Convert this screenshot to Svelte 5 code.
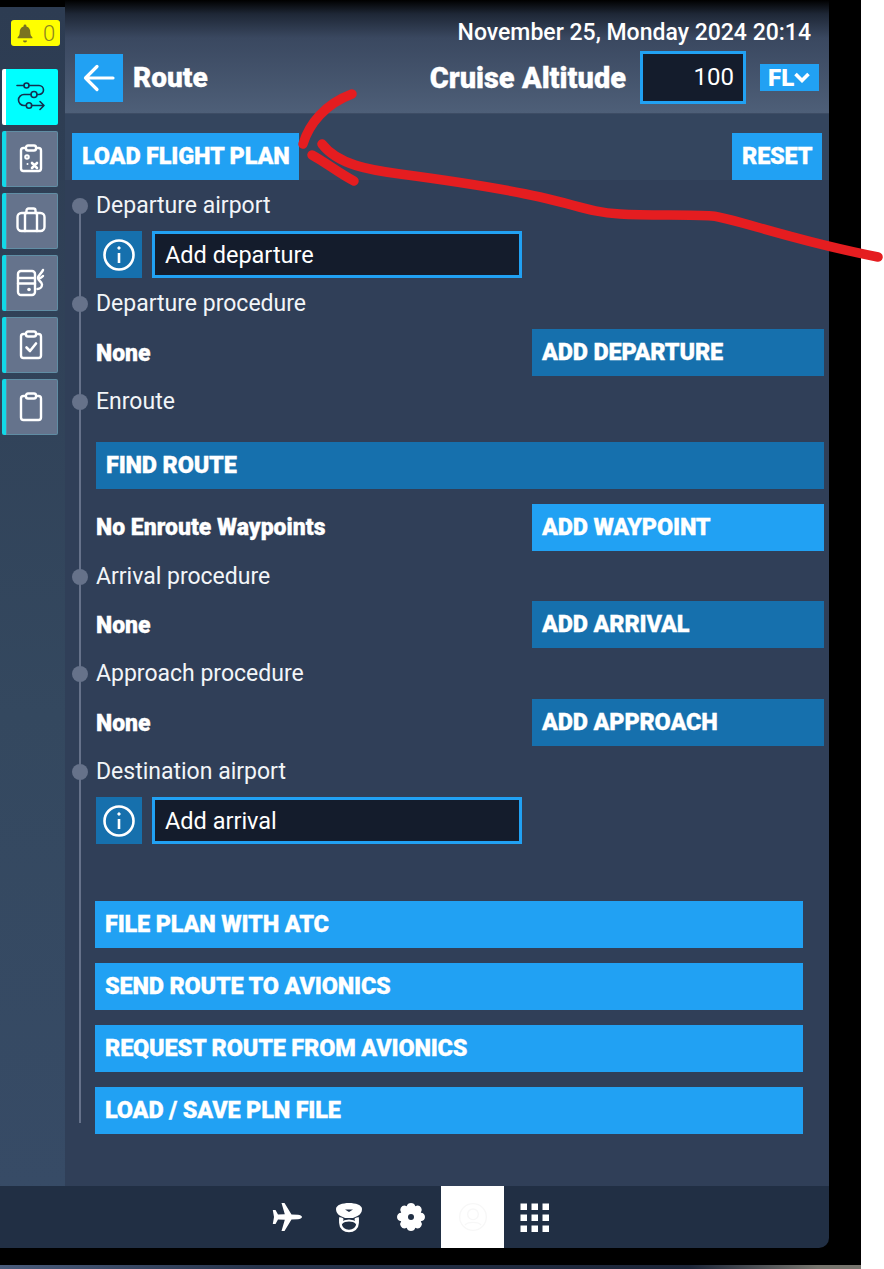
<script>
  const tabs = ['route', 'map', 'bag', 'fuel', 'check', 'clip'];
</script>

<div class="screen">
  <div class="frame">
    <div class="panel">
      <aside class="side">
        <div class="bell">
          <svg width="20" height="20" viewBox="0 0 17 17"><path d="M8.5 1.2a1.2 1.2 0 0 1 1.2 1.2v.5c2.4.6 3.3 2.6 3.3 5 0 2 .6 3.2 1.8 4.3v.8H2.2v-.8C3.4 11.100 4 9.900 4 7.900c0-2.400.9-4.400 3.300-5v-.5a1.200 1.200 0 0 1 1.200-1.200zM6.800 14.800h3.400a1.700 1.700 0 0 1-3.400 0z" fill="#7a7420"/></svg>
          <span>0</span>
        </div>
        {#each tabs as t, i}
          <div class="tab" class:on={i === 0}>
            <svg width="30" height="30" viewBox="0 0 30 30" fill="none" stroke="currentColor" stroke-width="2.400" stroke-linecap="round" stroke-linejoin="round">
              {#if t === 'route'}
                <g stroke-width="1.600">
                  <path d="M1 3.500h7M13 3.500h10a4 4 0 0 1 0 9h-1.500M15 12.500H8a4.500 4.500 0 0 0 0 11h2M15.500 23.500H28M24 19.500l4 4-4 4"/>
                  <circle cx="10.500" cy="3.500" r="2.500"/>
                  <circle cx="18" cy="12.500" r="3"/>
                  <circle cx="13" cy="23.500" r="2.700"/>
                </g>
              {:else if t === 'map'}
                <rect x="5" y="4" width="20" height="23" rx="2.500"/>
                <rect x="10" y="1.500" width="10" height="5" rx="2" fill="#65738c"/>
                <circle cx="11" cy="13" r="1.800" stroke-width="2"/>
                <path d="M16 19l5 5M21 19l-5 5" stroke-width="2.600"/>
                <circle cx="11.500" cy="20" r="1" fill="currentColor" stroke="none"/>
              {:else if t === 'bag'}
                <rect x="1.500" y="7" width="27" height="18" rx="4"/>
                <path d="M9 7V25M21 7V25M10.500 7V4.500a2 2 0 0 1 2-2h5a2 2 0 0 1 2 2V7"/>
              {:else if t === 'fuel'}
                <rect x="2" y="3" width="17" height="24" rx="3"/>
                <path d="M2 10h17M2 15.500h17"/>
                <circle cx="13" cy="21.500" r="1.800" fill="currentColor" stroke="none"/>
                <path d="M27 2c-1 3-5 5-5 8s4 3.500 4 6.500-2.500 4.500-4.500 4.500M27 8c-1 1.200-2 2-4 2.500"/>
              {:else if t === 'check'}
                <rect x="5" y="4" width="20" height="24" rx="2.500"/>
                <rect x="10" y="1.500" width="10" height="5" rx="2" fill="#65738c"/>
                <path d="M10.500 17.500l3.500 3.500 6-7.500" stroke-width="2.600"/>
              {:else}
                <rect x="5" y="4" width="20" height="24" rx="2.500"/>
                <rect x="10" y="1.500" width="10" height="5" rx="2" fill="#65738c"/>
              {/if}
            </svg>
          </div>
        {/each}
      </aside>

      <div class="main">
        <header class="head">
          <div class="date">November 25, Monday 2024 20:14</div>
          <div class="titlebar">
            <button class="back" aria-label="Back">
              <svg width="32" height="32" viewBox="0 0 32 32" fill="none" stroke="#fff" stroke-width="3.200" stroke-linecap="round" stroke-linejoin="round"><path d="M2.500 16H30M14 4.500L2.500 16 14 27.500"/></svg>
            </button>
            <h1>Route</h1>
            <span class="cruise">Cruise Altitude</span>
            <div class="alt">100</div>
            <button class="fl">FL<svg width="16" height="11" viewBox="0 0 16 11" fill="none" stroke="#fff" stroke-width="3.600"><path d="M1.500 2L8 8.500 14.500 2"/></svg></button>
          </div>
        </header>

        <div class="loadrow">
          <button class="btn bright load">LOAD FLIGHT PLAN</button>
          <button class="btn bright reset">RESET</button>
        </div>

        <div class="content">
          <div class="line"></div>

          <div class="label">Departure airport</div>
          <div class="field">
            <span class="info"><svg width="34" height="34" viewBox="0 0 34 34" fill="none" stroke="#fff" stroke-width="2.600"><circle cx="17" cy="17" r="14.500"/><path d="M17 15v10"/><circle cx="17" cy="10" r="1.200" fill="#fff" stroke-width="1"/></svg></span>
            <div class="input">Add departure</div>
          </div>

          <div class="label">Departure procedure</div>
          <div class="row">
            <b>None</b>
            <button class="btn dark side-btn">ADD DEPARTURE</button>
          </div>

          <div class="label enroute">Enroute</div>
          <button class="btn dark wide">FIND ROUTE</button>
          <div class="row gap">
            <b>No Enroute Waypoints</b>
            <button class="btn bright side-btn">ADD WAYPOINT</button>
          </div>

          <div class="label short">Arrival procedure</div>
          <div class="row">
            <b>None</b>
            <button class="btn dark side-btn">ADD ARRIVAL</button>
          </div>

          <div class="label">Approach procedure</div>
          <div class="row">
            <b>None</b>
            <button class="btn dark side-btn">ADD APPROACH</button>
          </div>

          <div class="label">Destination airport</div>
          <div class="field">
            <span class="info"><svg width="34" height="34" viewBox="0 0 34 34" fill="none" stroke="#fff" stroke-width="2.600"><circle cx="17" cy="17" r="14.500"/><path d="M17 15v10"/><circle cx="17" cy="10" r="1.200" fill="#fff" stroke-width="1"/></svg></span>
            <div class="input">Add arrival</div>
          </div>

          <div class="actions">
            <button class="btn bright">FILE PLAN WITH ATC</button>
            <button class="btn bright">SEND ROUTE TO AVIONICS</button>
            <button class="btn bright">REQUEST ROUTE FROM AVIONICS</button>
            <button class="btn bright">LOAD / SAVE PLN FILE</button>
          </div>
        </div>
      </div>

      <footer class="foot">
        <span class="fi">
          <svg width="32" height="30" viewBox="0 0 32 30" fill="#fff"><path d="M31 15c0-1.200-2-2.100-4-2.300l-6.500-.3L13.500 1H10.500l3.300 11.300-6.800.2L4.500 8H1.800l1.200 7-1.200 7h2.700L7 17.500l6.800.2L10.500 29h3l7-11.400 6.500-.3c2-.2 4-1.100 4-2.300z"/></svg>
        </span>
        <span class="fi">
          <svg width="30" height="32" viewBox="0 0 30 32"><path fill="#fff" d="M15 2C8.500 2 2 4 2 8c0 3 1.500 5.500 4.500 7L11 17h8l4.500-2c3-1.500 4.500-4 4.500-7C28 4 21.500 2 15 2z"/><path fill="#212f44" d="M11 8.500h8l-4 2.500z"/><path fill="none" stroke="#fff" stroke-width="2.600" d="M6.500 18c0 0 0 3 0 4.500C6.500 27 10.500 30 15 30s8.500-3 8.500-7.500V18"/><path fill="#fff" d="M5 16.500c2-.5 4 .5 4.500 1.500l-1 5c-1-.8-2-1-3-1zM25 16.500c-2-.5-4 .5-4.500 1.500l1 5c1-.8 2-1 3-1z"/><path fill="none" stroke="#fff" stroke-width="1.800" d="M7 22c2.400-1.700 5-2.500 8-2.500s5.600.8 8 2.500"/></svg>
        </span>
        <span class="fi">
          <svg width="30" height="30" viewBox="0 0 30 30"><path fill="#fff" d="M15 1a4.500 4.500 0 0 1 4.300 3.200 4.500 4.500 0 0 1 5.900 1.600 4.500 4.500 0 0 1-.4 5A4.500 4.500 0 0 1 29 15a4.500 4.500 0 0 1-4.200 4.200 4.500 4.500 0 0 1 .4 5 4.500 4.500 0 0 1-5.900 1.600A4.500 4.500 0 0 1 15 29a4.500 4.500 0 0 1-4.300-3.200 4.500 4.500 0 0 1-5.900-1.600 4.500 4.500 0 0 1 .4-5A4.500 4.500 0 0 1 1 15a4.500 4.500 0 0 1 4.200-4.200 4.500 4.500 0 0 1-.4-5 4.500 4.500 0 0 1 5.900-1.600A4.500 4.500 0 0 1 15 1z"/><circle cx="15" cy="15" r="3" fill="#212f44"/></svg>
        </span>
        <span class="fi active">
          <svg width="32" height="32" viewBox="0 0 36 36" fill="none" stroke="#f7f7f7" stroke-width="1.500"><circle cx="18" cy="18" r="15"/><circle cx="18" cy="15" r="6"/><path d="M9 27c3-4 15-4 18 0"/></svg>
        </span>
        <span class="fi">
          <svg width="30" height="30" viewBox="0 0 30 30" fill="#fff">
            {#each [0, 1, 2] as r}
              {#each [0, 1, 2] as c}
                <rect x={c * 11 + 0.500} y={r * 11 + 1.500} width="6.500" height="6.500"/>
              {/each}
            {/each}
          </svg>
        </span>
      </footer>
    </div>
  </div>

  <div class="strip"></div>

  <svg class="ink" width="884" height="269" viewBox="0 0 884 269" fill="none" stroke="#e51d20" stroke-linecap="round" stroke-linejoin="round" stroke-width="9.500">
    <path d="M303 144C309 124 325 104 352 94"/>
    <path d="M322 144C338 165 370 170 400 174S500 188 540 197S590 212 620 214S690 214 712 216S790 240 878 257"/>
    <path d="M312 155C325 162 340 174 354 181"/>
  </svg>
</div>

<style>
  :global(body) { margin: 0; background: #fff; }
  .screen {
    position: relative;
    width: 884px;
    height: 1269px;
    overflow: hidden;
    background: #fff;
    font-family: Roboto, "Liberation Sans", sans-serif;
    color: #fff;
  }
  .frame {
    width: 861px;
    height: 1265px;
    background: #000;
  }
  .panel {
    position: relative;
    width: 829px;
    height: 1248px;
    display: grid;
    grid-template-columns: 65px 1fr;
    grid-template-rows: 1186px 62px;
    border-bottom-right-radius: 10px;
    overflow: hidden;
  }
  .strip {
    height: 4px;
    width: 861px;
    background: linear-gradient(90deg, #4a5c7c, #27344c 30%, #1c2538 80%, #77756e 95%);
  }
  .side {
    margin-top: 7px;
    background: linear-gradient(180deg, #2d3c52, #34485f 60%, #374b66);
    display: flex;
    flex-direction: column;
    gap: 6px;
    padding-left: 2px;
  }
  .bell {
    width: 49px;
    height: 26px;
    margin: 13px 0 17px 9px;
    background: #ffff00;
    border-radius: 3px;
    display: flex;
    align-items: center;
    gap: 8px;
    padding-left: 4px;
    box-sizing: border-box;
    color: #8a8420;
    font-size: 22px;
    font-weight: 300;
  }
  .tab {
    width: 56px;
    height: 56px;
    box-sizing: border-box;
    background: #65738c;
    border-left: 4px solid #12d9e8;
    border-radius: 2px;
    display: flex;
    align-items: center;
    justify-content: center;
    color: #fff;
    padding-right: 2px;
    box-shadow: inset 0 0 0 1px rgba(90, 190, 210, 0.35);
  }
  .tab.on {
    background: #00ffff;
    border-left-color: #fff;
    color: #14304f;
    box-shadow: none;
  }
  .main {
    background: #303f58;
    display: flex;
    flex-direction: column;
    min-width: 0;
  }
  .head {
    height: 114px;
    box-sizing: border-box;
    background: linear-gradient(180deg, #000 0, #1e2736 14px, #3a4860 38px, #4e5f78 100%);
    border-bottom: 1px solid #3d4c64;
    padding: 18px 10px 0 10px;
  }
  .date {
    text-align: right;
    font-size: 23px;
    font-weight: 500;
    line-height: 30px;
    padding-right: 8px;
  }
  .titlebar {
    display: flex;
    align-items: center;
    margin-top: 3px;
  }
  button {
    border: 0;
    padding: 0;
    color: #fff;
    font-family: inherit;
    cursor: pointer;
  }
  .back {
    width: 48px;
    height: 48px;
    background: #21a1f3;
    display: flex;
    align-items: center;
    justify-content: center;
  }
  h1 {
    margin: 0 0 0 10px;
    font-size: 28px;
    font-weight: 900;
    flex: 1;
    -webkit-text-stroke: 0.3px #fff;
  }
  .cruise {
    font-size: 29px;
    font-weight: 900;
    margin-right: 14px;
    -webkit-text-stroke: 0.3px #fff;
  }
  .alt {
    width: 106px;
    height: 53px;
    box-sizing: border-box;
    border: 3px solid #21a1f3;
    background: #141c2c;
    text-align: right;
    font-size: 24px;
    line-height: 47px;
    padding-right: 9px;
    margin-right: 14px;
  }
  .fl {
    width: 59px;
    height: 27px;
    background: #21a1f3;
    font-size: 24px;
    font-weight: 900;
    display: flex;
    align-items: center;
    padding-left: 8px;
  }
  .loadrow {
    display: flex;
    justify-content: space-between;
    box-sizing: border-box;
    height: 66px;
    padding: 19px 7px 0 7px;
    background: #34455e;
  }
  .btn {
    height: 47px;
    font-size: 23.500px;
    font-weight: 900;
    text-align: left;
    padding: 0 0 2px 10px;
    letter-spacing: -0.2px;
    box-sizing: border-box;
    display: block;
    -webkit-text-stroke: 0.3px #fff;
  }
  .bright { background: #21a1f3; }
  .dark { background: #1670ad; }
  .load { width: 227px; }
  .reset { width: 90px; }
  .content {
    position: relative;
    padding-left: 31px;
    padding-right: 5px;
  }
  .line {
    position: absolute;
    left: 14px;
    top: 25px;
    height: 918px;
    width: 2px;
    background: #66728a;
  }
  .label {
    position: relative;
    height: 51px;
    font-size: 23px;
    line-height: 51px;
    color: #f2f5f8;
  }
  .label::before {
    content: '';
    position: absolute;
    left: -24px;
    top: 18px;
    width: 16px;
    height: 16px;
    border-radius: 50%;
    background: #66728a;
  }
  .enroute { height: 66px; }
  .short { height: 50px; line-height: 52px; }
  .field {
    display: flex;
    gap: 10px;
    height: 47px;
  }
  .info {
    width: 46px;
    height: 47px;
    background: #1670ad;
    display: flex;
    align-items: center;
    justify-content: center;
  }
  .input {
    width: 370px;
    height: 47px;
    box-sizing: border-box;
    border: 3px solid #21a1f3;
    background: #141c2c;
    font-size: 23.500px;
    line-height: 42px;
    padding-left: 10px;
  }
  .row {
    display: flex;
    align-items: center;
    justify-content: space-between;
    height: 47px;
  }
  .row.gap { margin-top: 15px; }
  .row b {
    font-size: 23px;
    font-weight: 900;
    padding-top: 2px;
    -webkit-text-stroke: 0.3px #fff;
  }
  .row.gap b { padding-top: 0; }
  .side-btn { width: 292px; }
  .wide { width: 100%; }
  .actions {
    margin-top: 57px;
    width: 708px;
    margin-left: -1px;
    display: flex;
    flex-direction: column;
    gap: 15px;
  }
  .actions .btn { width: 100%; }
  .foot {
    grid-column: 1 / -1;
    background: #212f44;
    display: flex;
    padding-left: 256px;
  }
  .fi {
    width: 62px;
    height: 62px;
    display: flex;
    align-items: center;
    justify-content: center;
  }
  .fi.active { background: #fff; margin-left: -1px; width: 63px; }
  .ink {
    position: absolute;
    left: 0;
    top: 0;
  }
</style>
